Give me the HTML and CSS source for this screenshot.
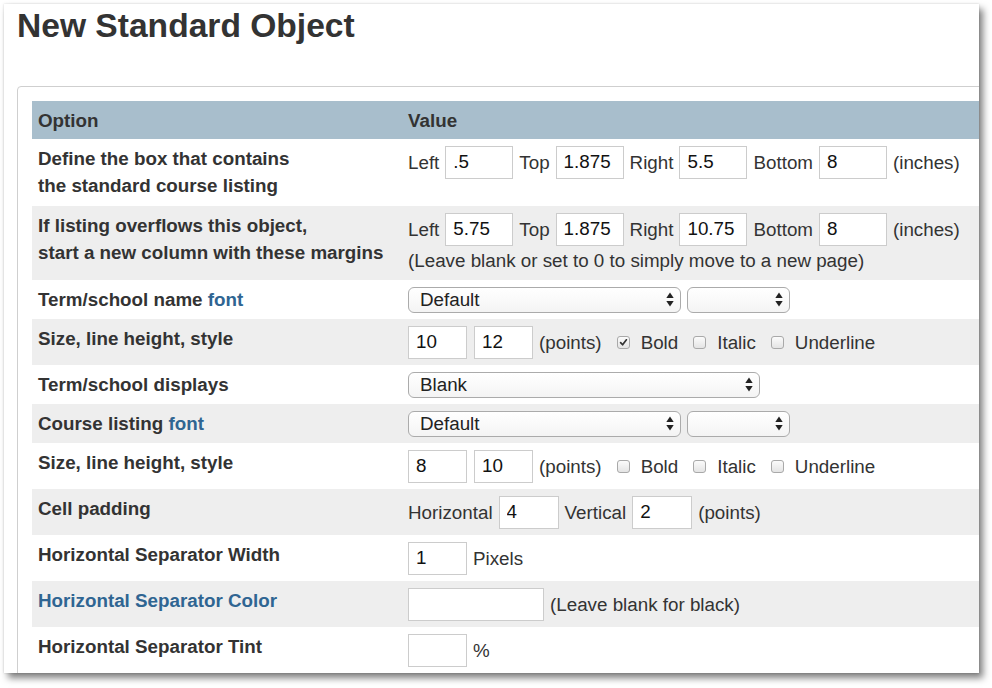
FILE: index.html
```html
<!DOCTYPE html>
<html>
<head>
<meta charset="utf-8">
<title>New Standard Object</title>
<link rel="stylesheet" href="styles.css">
</head>
<body>
<div class="window">
  <h1 class="title">New Standard Object</h1>
  <div class="panel">
    <table class="opts">
      <thead>
        <tr><th class="c1">Option</th><th>Value</th></tr>
      </thead>
      <tbody>
        <tr class="first">
          <td class="label">Define the box that contains<br>the standard course listing</td>
          <td class="value">
            <div class="line in">
              <span>Left</span><input class="box w68" type="text" value=".5">
              <span>Top</span><input class="box w68" type="text" value="1.875">
              <span>Right</span><input class="box w68" type="text" value="5.5">
              <span>Bottom</span><input class="box w68" type="text" value="8">
              <span>(inches)</span>
            </div>
          </td>
        </tr>
        <tr class="alt">
          <td class="label">If listing overflows this object,<br>start a new column with these margins</td>
          <td class="value">
            <div class="line in">
              <span>Left</span><input class="box w68" type="text" value="5.75">
              <span>Top</span><input class="box w68" type="text" value="1.875">
              <span>Right</span><input class="box w68" type="text" value="10.75">
              <span>Bottom</span><input class="box w68" type="text" value="8">
              <span>(inches)</span>
            </div>
            <div class="note">(Leave blank or set to 0 to simply move to a new page)</div>
          </td>
        </tr>
        <tr>
          <td class="label">Term/school name <a class="link" href="#">font</a></td>
          <td class="value">
            <div class="line sel">
              <div class="select w273"><span>Default</span><svg class="arr" width="8" height="15" viewBox="0 0 8 15"><polygon points="0.3,6 4,0.5 7.7,6"/><polygon points="0.3,9 4,14.5 7.7,9"/></svg></div>
              <div class="select w103"><span></span><svg class="arr" width="8" height="15" viewBox="0 0 8 15"><polygon points="0.3,6 4,0.5 7.7,6"/><polygon points="0.3,9 4,14.5 7.7,9"/></svg></div>
            </div>
          </td>
        </tr>
        <tr class="alt">
          <td class="label">Size, line height, style</td>
          <td class="value">
            <div class="line in">
              <input class="box w59" type="text" value="10">
              <input class="box w59 ml1" type="text" value="12">
              <span>(points)</span>
              <span class="check"><span class="cb"><svg width="11" height="11" viewBox="0 0 11 11"><path d="M2.6 5.6 L4.6 7.8 L8.4 2.8" fill="none" stroke="#333" stroke-width="1.7" stroke-linecap="round" stroke-linejoin="round"/></svg></span><span>Bold</span></span>
              <span class="check"><span class="cb"></span><span>Italic</span></span>
              <span class="check"><span class="cb"></span><span>Underline</span></span>
            </div>
          </td>
        </tr>
        <tr>
          <td class="label">Term/school displays</td>
          <td class="value">
            <div class="line sel">
              <div class="select w352"><span>Blank</span><svg class="arr" width="8" height="15" viewBox="0 0 8 15"><polygon points="0.3,6 4,0.5 7.7,6"/><polygon points="0.3,9 4,14.5 7.7,9"/></svg></div>
            </div>
          </td>
        </tr>
        <tr class="alt">
          <td class="label">Course listing <a class="link" href="#">font</a></td>
          <td class="value">
            <div class="line sel">
              <div class="select w273"><span>Default</span><svg class="arr" width="8" height="15" viewBox="0 0 8 15"><polygon points="0.3,6 4,0.5 7.7,6"/><polygon points="0.3,9 4,14.5 7.7,9"/></svg></div>
              <div class="select w103"><span></span><svg class="arr" width="8" height="15" viewBox="0 0 8 15"><polygon points="0.3,6 4,0.5 7.7,6"/><polygon points="0.3,9 4,14.5 7.7,9"/></svg></div>
            </div>
          </td>
        </tr>
        <tr>
          <td class="label">Size, line height, style</td>
          <td class="value">
            <div class="line in">
              <input class="box w59" type="text" value="8">
              <input class="box w59 ml1" type="text" value="10">
              <span>(points)</span>
              <span class="check"><span class="cb"></span><span>Bold</span></span>
              <span class="check"><span class="cb"></span><span>Italic</span></span>
              <span class="check"><span class="cb"></span><span>Underline</span></span>
            </div>
          </td>
        </tr>
        <tr class="alt">
          <td class="label">Cell padding</td>
          <td class="value">
            <div class="line in">
              <span>Horizontal</span><input class="box w60" type="text" value="4">
              <span>Vertical</span><input class="box w60" type="text" value="2">
              <span>(points)</span>
            </div>
          </td>
        </tr>
        <tr>
          <td class="label">Horizontal Separator Width</td>
          <td class="value">
            <div class="line in">
              <input class="box w59" type="text" value="1">
              <span>Pixels</span>
            </div>
          </td>
        </tr>
        <tr class="alt">
          <td class="label"><a class="link" href="#">Horizontal Separator Color</a></td>
          <td class="value">
            <div class="line in">
              <input class="box w136" type="text" value="">
              <span>(Leave blank for black)</span>
            </div>
          </td>
        </tr>
        <tr>
          <td class="label">Horizontal Separator Tint</td>
          <td class="value">
            <div class="line in">
              <input class="box w59" type="text" value="">
              <span>%</span>
            </div>
          </td>
        </tr>
      </tbody>
    </table>
  </div>
</div>
</body>
</html>
```
FILE: styles.css
```css
* { box-sizing: border-box; }
html, body { margin: 0; padding: 0; background: #ffffff; }
body {
  font-family: "Liberation Sans", Arial, Helvetica, sans-serif;
  color: #333333;
  height: 688px;
  overflow: hidden;
}
.window {
  margin: 4px 0 0 4px;
  width: 975px;
  height: 669px;
  overflow: hidden;
  background: #ffffff;
  box-shadow: 0 0 2px rgba(0,0,0,0.16), 4px 5px 7px rgba(0,0,0,0.5);
}
.title {
  margin: 0;
  padding: 3px 0 0 13px;
  font-size: 33.6px;
  line-height: 37px;
  font-weight: bold;
  color: #333333;
}
.panel {
  margin: 42px 0 0 13px;
  width: 1010px;
  border: 1px solid #cfcfcf;
  border-radius: 4px;
  padding: 14px;
}
.opts {
  width: 100%;
  border-collapse: collapse;
  font-size: 18.8px;
}
.opts th {
  background: #a8becc;
  height: 38px;
  padding: 0 6px;
  text-align: left;
  font-weight: bold;
  line-height: 27px;
  color: #333333;
}
.opts th.c1 { width: 370px; }
.opts td {
  padding: 6px 6px;
  vertical-align: top;
  line-height: 27px;
}
.opts tr.first td { padding-bottom: 7px; }
.opts tr.alt td { background: #eeeeee; }
.label { font-weight: bold; color: #333333; }
.link { color: #2f6592; text-decoration: none; }
.value { color: #333333; }
.line {
  display: flex;
  align-items: center;
  gap: 6px;
  white-space: nowrap;
}
.line.in { height: 34px; }
.line.sel { height: 27px; }
.note { margin-top: 1px; }
.box {
  height: 33px;
  border: 1px solid #cccccc;
  padding: 0 7px;
  margin: 0;
  font-family: "Liberation Sans", Arial, Helvetica, sans-serif;
  font-size: 18.8px;
  color: #111111;
  background: #ffffff;
  outline: none;
}
.w59 { width: 59px; }
.w60 { width: 60px; }
.w68 { width: 68px; }
.w136 { width: 136px; }
.ml1 { margin-left: 1px; }
.select {
  display: flex;
  align-items: center;
  justify-content: space-between;
  height: 26px;
  border: 1px solid #ababab;
  border-radius: 6px;
  padding: 0 6px 0 11px;
  background: linear-gradient(#ffffff, #f4f4f4);
  color: #222222;
}
.w273 { width: 273px; }
.w103 { width: 103px; }
.w352 { width: 352px; }
.arr { fill: #222222; flex: none; }
.check {
  display: flex;
  align-items: center;
  gap: 11px;
  margin-left: 9px;
}
.cb {
  width: 13px;
  height: 13px;
  border: 1px solid #a9a9a9;
  border-radius: 3px;
  background: linear-gradient(#fbfbfb, #e4e4e4);
  display: flex;
  align-items: center;
  justify-content: center;
  flex: none;
}
.cb svg { display: block; }
```
